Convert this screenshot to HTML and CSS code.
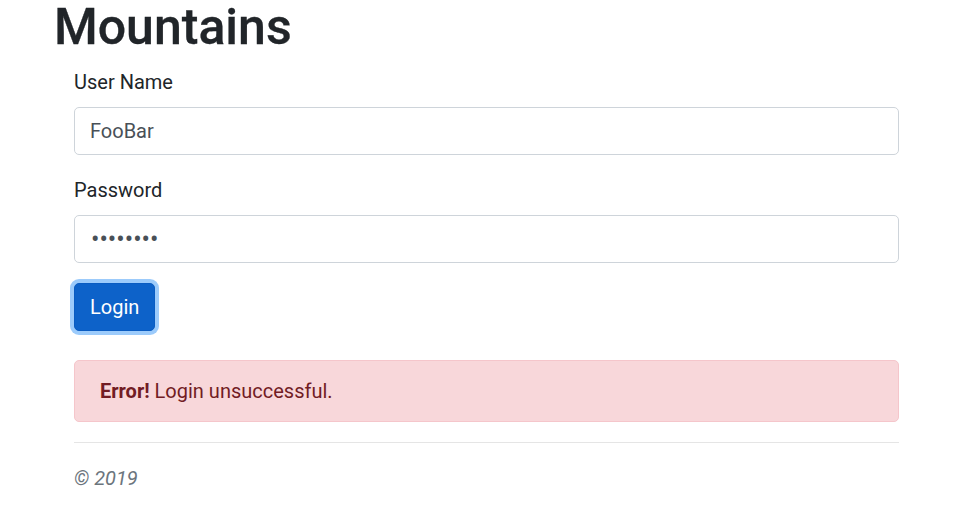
FILE: index.html
```html
<!DOCTYPE html>
<html lang="en">
<head>
<meta charset="utf-8">
<title>Mountains</title>
<link rel="stylesheet" href="styles.css">
</head>
<body>
<div class="page">
  <h1 class="title">Mountains</h1>
  <div class="content">
    <form class="login-form">
      <div class="form-group">
        <label class="form-label" for="username">User Name</label>
        <input class="form-control" id="username" type="text" value="FooBar">
      </div>
      <div class="form-group">
        <label class="form-label" for="password">Password</label>
        <input class="form-control password" id="password" type="password" value="password">
      </div>
      <button class="btn-primary" type="button">Login</button>
    </form>
    <div class="alert-danger"><strong>Error!</strong> Login unsuccessful.</div>
    <hr class="divider">
    <footer class="footer">© 2019</footer>
  </div>
</div>
</body>
</html>
```

FILE: styles.css
```css
* { box-sizing: border-box; }
html, body { margin: 0; padding: 0; background: #fff; }
body {
  font-family: "Roboto", "Liberation Sans", sans-serif;
  font-size: 20px;
  line-height: 30px;
  color: #212529;
}
.page { padding: 0 0 0 54px; width: 900px; }
.title {
  margin: 0 0 13px 0;
  font-size: 50px;
  line-height: 54px;
  font-weight: 500;
  -webkit-text-stroke: 0.3px #212529;
}
.content { padding-left: 20px; }
.form-group { margin-bottom: 20px; }
.form-label { display: block; margin-bottom: 10px; }
.form-control {
  display: block;
  width: 825px;
  height: 48px;
  padding: 7px 15px;
  font: inherit;
  color: #495057;
  background: #fff;
  border: 1px solid #ced4da;
  border-radius: 5px;
  outline: none;
}
.form-control.password {
  font-size: 25px;
  padding-left: 16px;
}
.btn-primary {
  display: block;
  height: 48px;
  padding: 0 15px;
  font: inherit;
  color: #fff;
  background: #0d62c9;
  border: 1px solid #0a5cc2;
  border-radius: 5px;
  box-shadow: 0 0 0 4px #9ccbfb;
}
.login-form { margin-bottom: 29px; }
.alert-danger {
  width: 825px;
  padding: 15px 25px;
  color: #721c24;
  background: #f8d7da;
  border: 1px solid #f5c6cb;
  border-radius: 5px;
  margin-bottom: 20px;
}
.alert-danger strong { font-weight: 700; }
.divider {
  width: 825px;
  margin: 20px 0;
  border: 0;
  border-top: 1px solid rgba(0,0,0,.1);
}
.footer { color: #6c757d; font-style: italic; }
```
